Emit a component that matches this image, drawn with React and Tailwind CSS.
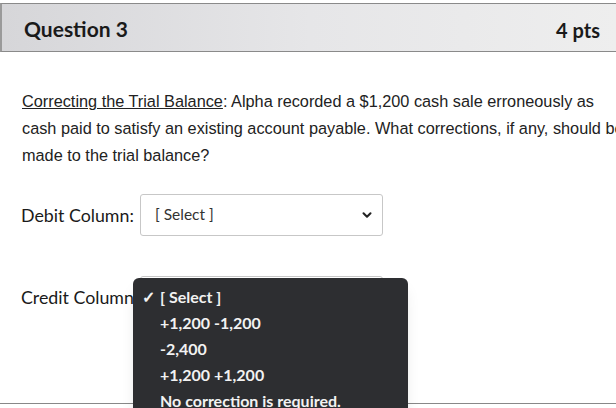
import { ChevronDown } from 'lucide-react'

const LATO = { fontFamily: 'Lato, "Open Sans", sans-serif' }

const options = ['[ Select ]', '+1,200 -1,200', '-2,400', '+1,200 +1,200', 'No correction is required.']

function SelectBox() {
  return (
    <div className="w-[243px] h-[42px] border border-[#c7c7c7] rounded-[3px] bg-white flex items-center justify-between pl-[14px] pr-[8px]">
      <span className="text-[15.5px] text-[#333]">[ Select ]</span>
      <ChevronDown size={14} strokeWidth={3.5} className="text-[#222]" />
    </div>
  )
}

export default function App() {
  return (
    <div className="w-[616px] h-[408px] overflow-hidden bg-white relative" style={LATO}>
      <div className="mt-[3px] h-[49px] border-t border-b border-[#8a8a8a] border-l-2 border-l-[#9a9a9a] bg-gradient-to-r from-[#d6d6d9] via-[#e6e6e8] to-[#eeeeee] flex items-center justify-between pl-[22px] pr-[16px]">
        <span className="text-[21px] font-bold text-[#1a1a1a] pt-[2px]">Question 3</span>
        <span className="text-[20px] font-bold text-[#1a1a1a] pt-[4px]">4 pts</span>
      </div>

      <div className="pl-[22px] pt-[36px] whitespace-nowrap text-[16.3px] leading-[27px] text-[#222]" style={{ fontFamily: '"Liberation Sans", Arial, sans-serif' }}>
        <span className="underline">Correcting the Trial Balance</span>: Alpha recorded a $1,200 cash sale erroneously as
        <br />
        cash paid to satisfy an existing account payable. What corrections, if any, should be
        <br />
        made to the trial balance?
      </div>

      <div className="flex items-center pl-[21px] mt-[25px] gap-[6px]">
        <span className="text-[17.8px] w-[113px] whitespace-nowrap text-[#1a1a1a]">Debit Column:</span>
        <SelectBox />
      </div>

      <div className="flex items-center pl-[21px] mt-[40px] gap-[6px]">
        <span className="text-[17.8px] w-[113px] whitespace-nowrap text-[#1a1a1a]">Credit Column:</span>
        <SelectBox />
      </div>

      <div className="absolute left-0 right-0 top-[403px] border-t border-[#888]" />

      <div className="absolute left-[133px] top-[278px] w-[275px] h-[150px] bg-[#2d2e31] rounded-[6px] pt-[6px] shadow-lg">
        {options.map((o, i) => (
          <div key={o} className="h-[26px] flex items-center text-[16px] font-bold text-[#f2f2f2]">
            <span className="w-[27px] pl-[9px] text-[16px]">{i === 0 ? '✓' : ''}</span>
            <span>{o}</span>
          </div>
        ))}
      </div>
    </div>
  )
}
